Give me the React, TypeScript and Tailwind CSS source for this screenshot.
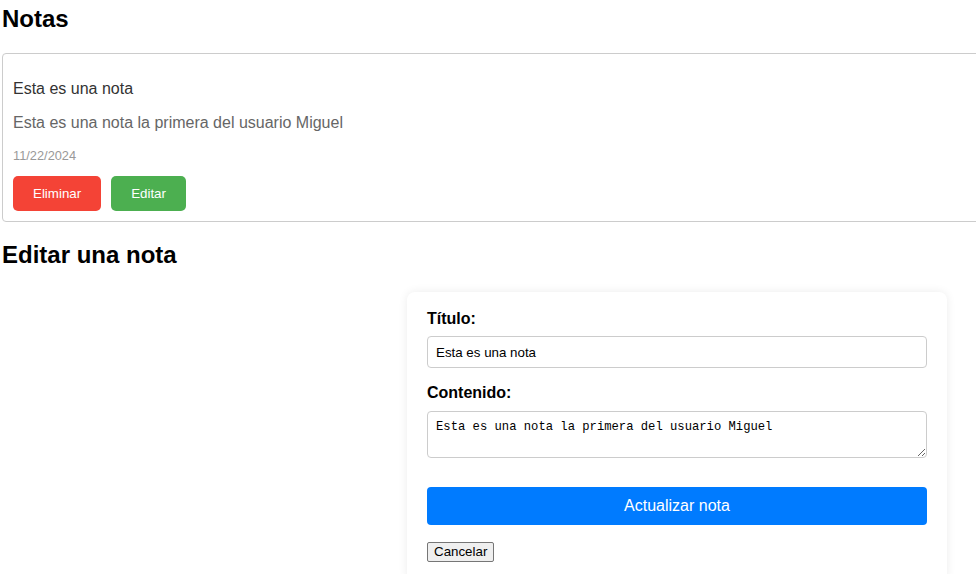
import { useState } from "react";

type Note = { id: number; title: string; content: string; date: string };

const notes: Note[] = [
  { id: 1, title: "Esta es una nota", content: "Esta es una nota la primera del usuario Miguel", date: "11/22/2024" },
];

function NoteCard({ note }: { note: Note }) {
  return (
    <div className="rounded-[4px] border border-[#ccc] px-[10px] pb-[10px] pt-[26px]">
      <h3 className="text-[16px] leading-[18px] text-[#333]">{note.title}</h3>
      <p className="mt-[16px] text-[16px] leading-[18px] text-[#666]">{note.content}</p>
      <p className="mt-[16px] text-[12.8px] leading-[15px] text-[#999]">{note.date}</p>
      <div className="mt-[13px] flex gap-[10px]">
        <button
          type="button"
          className="rounded-[5px] bg-[#f44336] px-[20px] py-[10px] text-[13.33px] leading-[15px] text-white"
        >
          Eliminar
        </button>
        <button
          type="button"
          className="rounded-[5px] bg-[#4caf50] px-[20px] py-[10px] text-[13.33px] leading-[15px] text-white"
        >
          Editar
        </button>
      </div>
    </div>
  );
}

function EditForm({ note }: { note: Note }) {
  const [title, setTitle] = useState(note.title);
  const [content, setContent] = useState(note.content);

  return (
    <div className="mx-auto w-[540px] rounded-[8px] bg-white px-[20px] pb-[20px] pt-[18px] shadow-[0_0_10px_rgba(0,0,0,0.08)]">
      <label className="block text-[16px] font-bold leading-[18px] text-black">Título:</label>
      <input
        value={title}
        onChange={(e) => setTitle(e.target.value)}
        className="mt-[8px] block h-[32px] w-full rounded-[4px] border border-[#ccc] px-[8px] text-[13.33px] text-black outline-none"
      />
      <label className="mt-[16px] block text-[16px] font-bold leading-[18px] text-black">Contenido:</label>
      <textarea
        value={content}
        onChange={(e) => setContent(e.target.value)}
        className="mt-[9px] block h-[47px] w-full rounded-[4px] border border-[#ccc] px-[8px] py-[8px] text-[12.2px] leading-[15px] text-black outline-none"
        style={{ fontFamily: '"Liberation Mono", monospace' }}
      />
      <button
        type="button"
        className="mt-[29px] block h-[38px] w-full rounded-[4px] bg-[#007bff] text-[16px] text-white"
      >
        Actualizar nota
      </button>
      <button
        type="button"
        className="mt-[17px] block rounded-[2px] border border-[#767676] bg-[#efefef] px-[6px] py-[1px] text-[13.33px] leading-[16px] text-black"
      >
        Cancelar
      </button>
    </div>
  );
}

export default function App() {
  return (
    <div className="h-[574px] w-full overflow-hidden bg-white" style={{ fontFamily: '"Liberation Sans", Arial, sans-serif' }}>
      <div className="w-[1354px] px-[2px]">
        <h2 className="mt-[5px] text-[24px] font-bold leading-[28px] text-black">Notas</h2>
        <div className="mt-[20px]">
          {notes.map((n) => (
            <NoteCard key={n.id} note={n} />
          ))}
        </div>
        <h2 className="mt-[19px] text-[24px] font-bold leading-[28px] text-black">Editar una nota</h2>
        <div className="mt-[23px]">
          <EditForm note={notes[0]} />
        </div>
      </div>
    </div>
  );
}
